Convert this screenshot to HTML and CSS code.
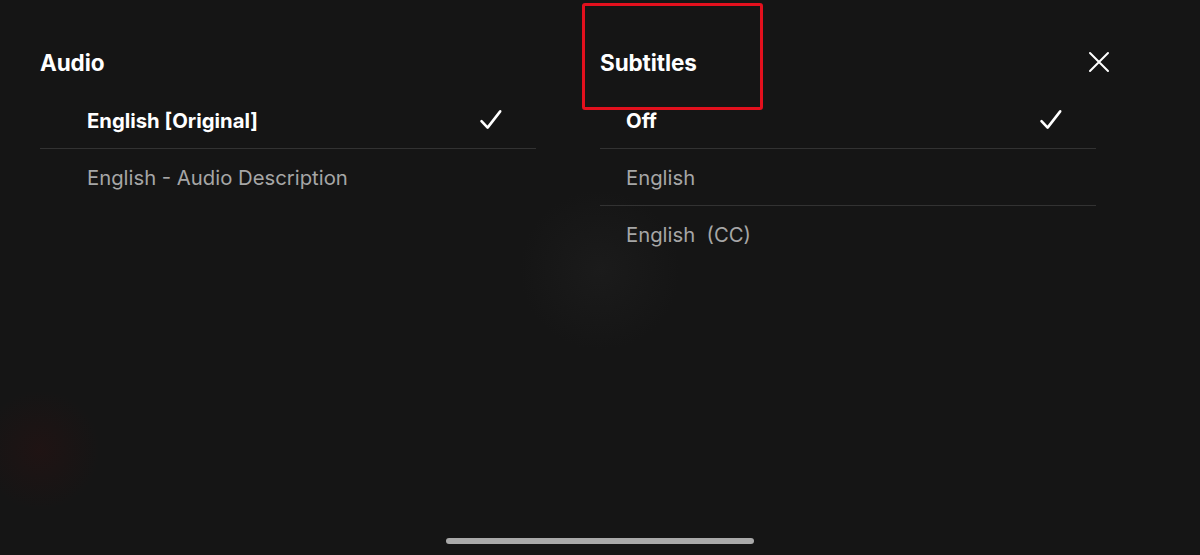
FILE: index.html
```html
<!DOCTYPE html>
<html>
<head>
	<title>Audio &amp; Subtitles</title>
	<link rel="stylesheet" href="styles.css">
</head>
<body>
	<div class="sheet">
		<div class="panel">
			<div class="column audio">
				<div class="heading">Audio</div>
				<ul class="options">
					<li class="option selected">English [Original]
						<svg class="check" width="24" height="24" viewBox="0 0 24 24"><path d="M2.5 13.2 L8.6 19.6 L21.2 3.4" fill="none" stroke="#fff" stroke-width="2.6" stroke-linecap="round" stroke-linejoin="round"/></svg>
					</li>
					<li class="option">English - Audio Description</li>
				</ul>
			</div>

			<div class="column subtitles">
				<div class="heading">Subtitles
					<button class="close" type="button">
						<svg width="22" height="22" viewBox="0 0 22 22"><path d="M2 2 L20 20 M20 2 L2 20" fill="none" stroke="#fff" stroke-width="2" stroke-linecap="round"/></svg>
					</button>
				</div>
				<ul class="options">
					<li class="option selected">Off
						<svg class="check" width="24" height="24" viewBox="0 0 24 24"><path d="M2.5 13.2 L8.6 19.6 L21.2 3.4" fill="none" stroke="#fff" stroke-width="2.6" stroke-linecap="round" stroke-linejoin="round"/></svg>
					</li>
					<li class="option">English</li>
					<li class="option">English&nbsp; (CC)</li>
				</ul>
			</div>
		</div>

		<div class="callout"></div>
		<div class="home-bar"></div>
	</div>
</body>
</html>
```

FILE: styles.css
```css
html, body { margin: 0; height: 100%; }
body { background-color: #151515; font-family: Inter, Roboto, "Liberation Sans", sans-serif; color: #fff; overflow: hidden; }

.sheet {
	position: relative;
	height: 555px;
	display: flex;
	flex-direction: column;
	background:
		radial-gradient(circle at 40px 450px, rgba(50, 16, 16, 0.35), transparent 60px),
		radial-gradient(circle at 600px 270px, rgba(34, 34, 34, 0.45), transparent 80px),
		#151515;
}

.panel { display: flex; gap: 64px; padding: 34px 0 0 40px; }
.column { width: 496px; }

.heading {
	display: flex;
	justify-content: space-between;
	align-items: center;
	height: 56px;
	padding-bottom: 2px;
	font-size: 22.5px;
	font-weight: 700;
	letter-spacing: -0.1px;
}

.close { background: none; border: 0; padding: 0; margin-right: -14px; width: 22px; height: 22px; cursor: pointer; }
.close svg { display: block; }

.options { list-style: none; margin: 0; padding: 0; }
.option {
	display: flex;
	justify-content: space-between;
	align-items: center;
	height: 56px;
	padding: 0 33px 0 47px;
	border-bottom: 1px solid #323232;
	font-size: 20.3px;
	color: #a6a6a6;
}
.subtitles .option { padding-left: 26px; }
.option:last-child { border-bottom: none; }
.option.selected { color: #fff; font-weight: 700; }
.check { display: block; }

.callout {
	position: absolute;
	left: 582px;
	top: 3px;
	width: 175px;
	height: 101px;
	border: 3px solid #e3101d;
	border-radius: 3px;
}

.home-bar {
	position: absolute;
	left: 446px;
	bottom: 11px;
	width: 308px;
	height: 6px;
	border-radius: 3px;
	background-color: #a9a9a9;
}
```
